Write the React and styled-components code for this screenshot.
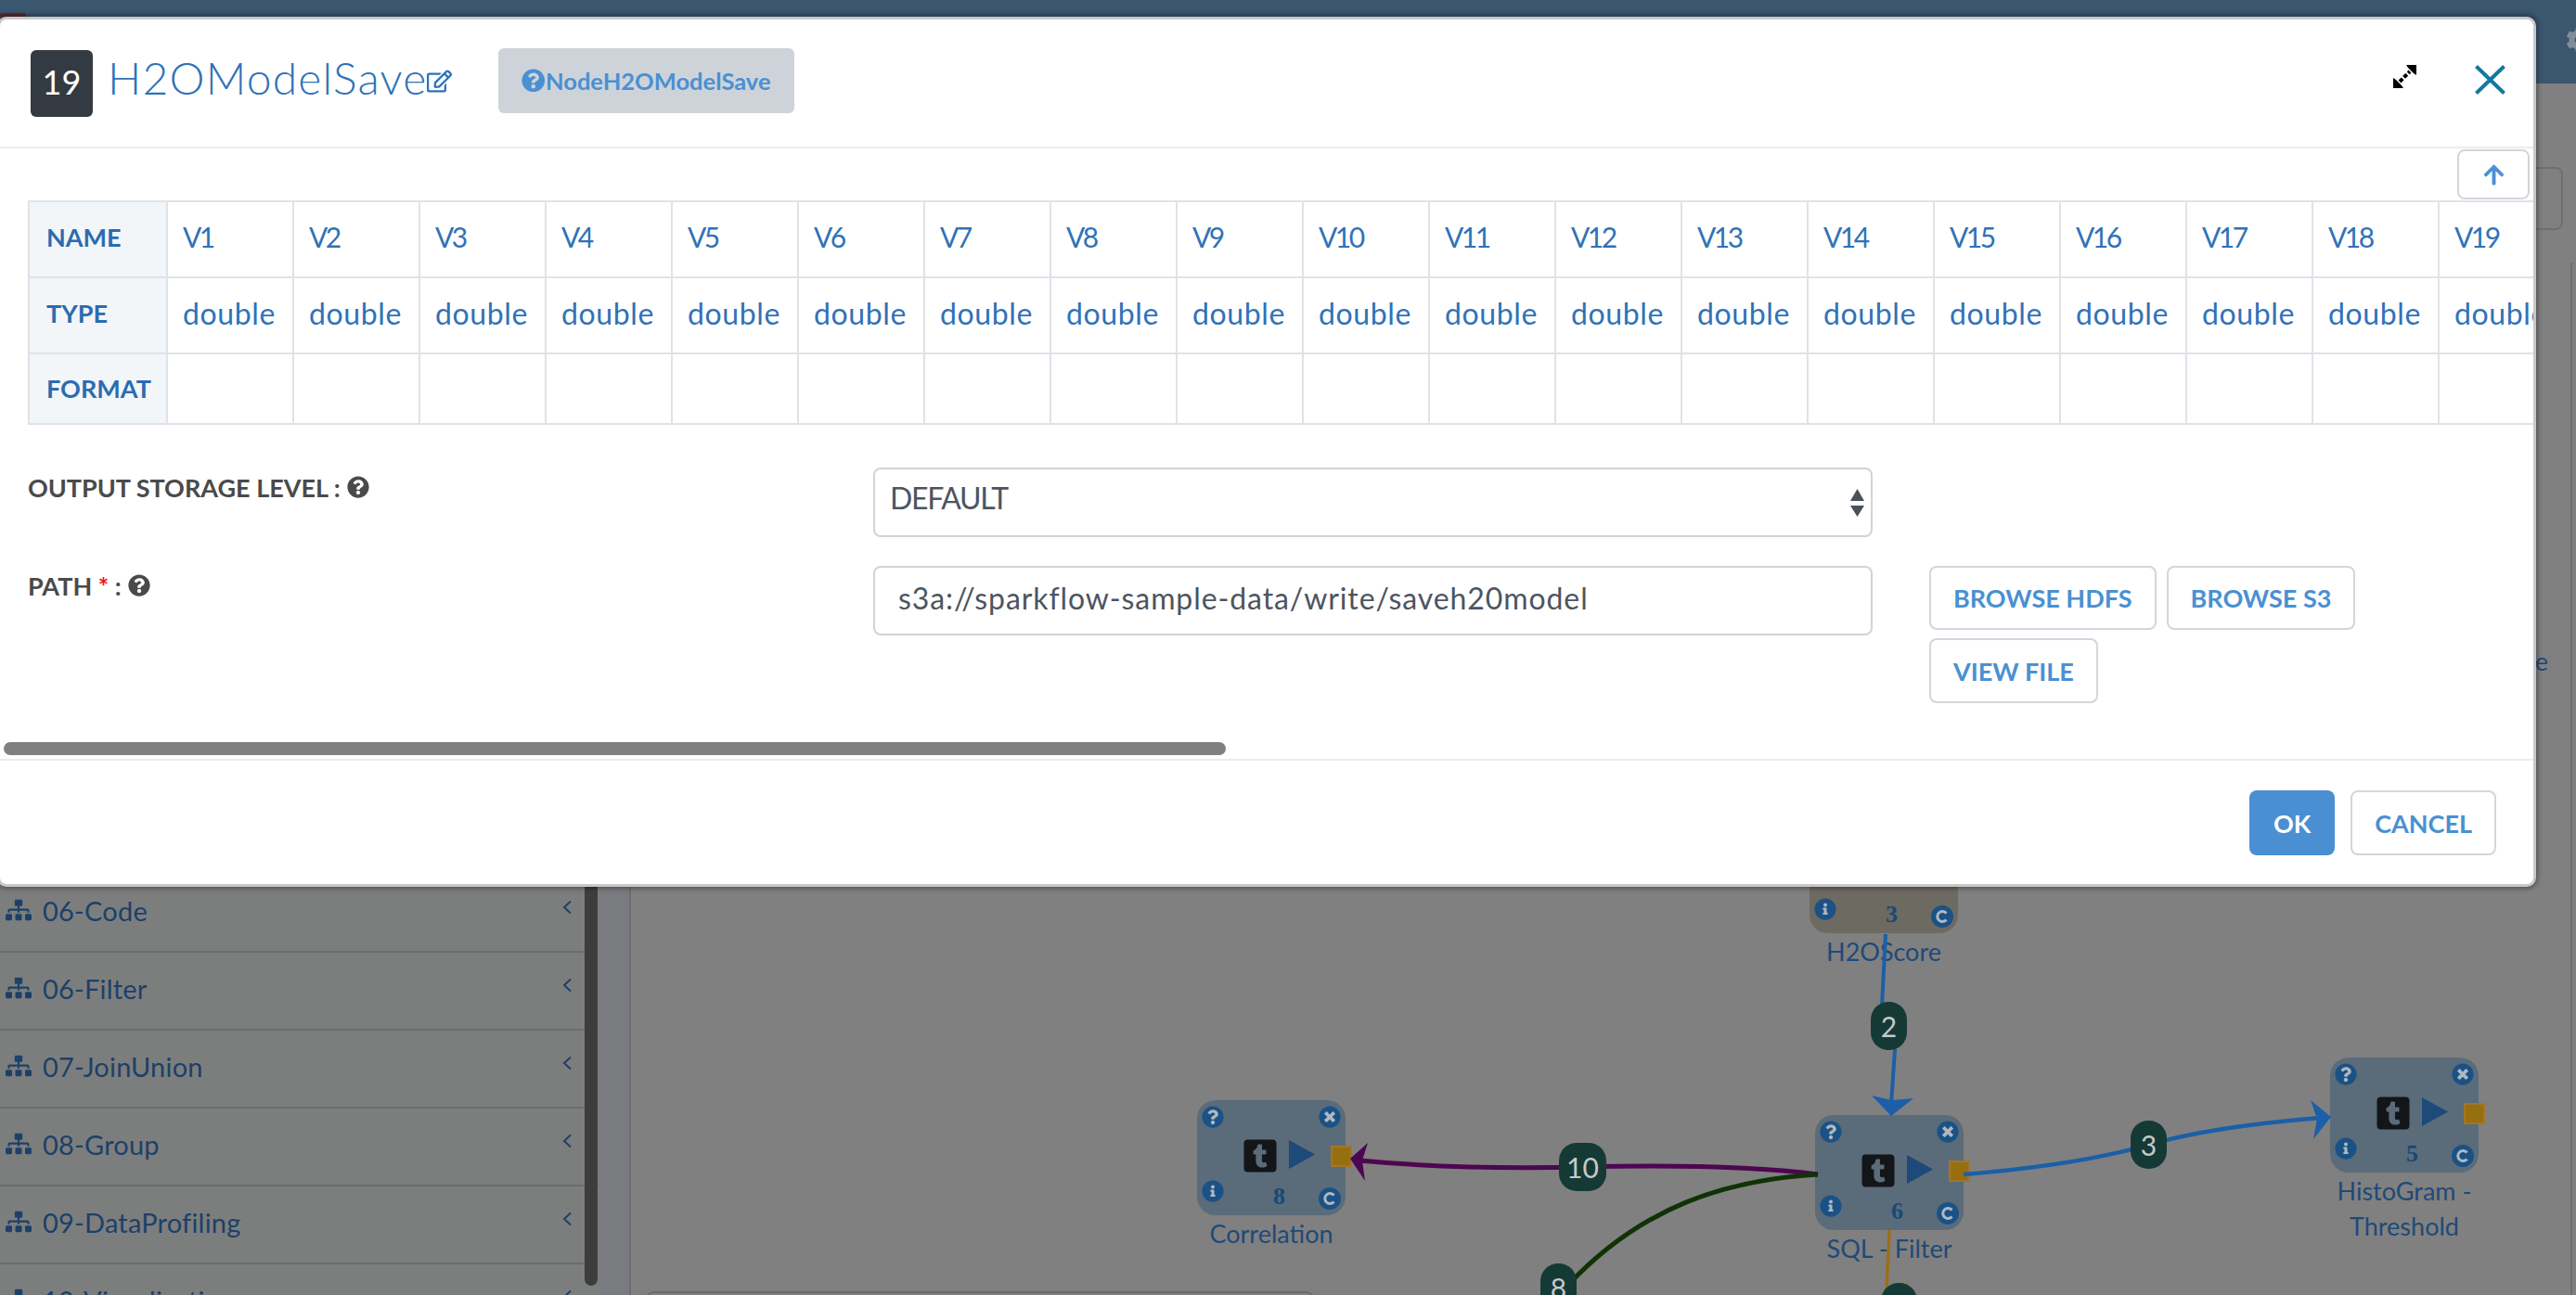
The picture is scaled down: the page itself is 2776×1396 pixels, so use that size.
import React from "react";
import styled, { createGlobalStyle } from "styled-components";
import {
  FaSitemap,
  FaCog,
  FaQuestionCircle,
  FaTimesCircle,
  FaInfoCircle,
  FaTumblrSquare,
  FaRegEdit,
  FaArrowUp,
} from "react-icons/fa";

const FONT = `Lato, "Noto Sans", sans-serif`;

const CATEGORIES = ["06-Code", "06-Filter", "07-JoinUnion", "08-Group", "09-DataProfiling", "10-Visualization"];

const COLUMNS = Array.from({ length: 24 }, (_, i) => `V${i + 1}`);

// canvas starts at 680,90 on the page
const NODES = [
  { id: 3, x: 1270, y: 792, label: ["H2OScore"], active: true },
  { id: 8, x: 610, y: 1096, label: ["Correlation"] },
  { id: 6, x: 1276, y: 1112, label: ["SQL - Filter"] },
  { id: 5, x: 1831, y: 1050, label: ["HistoGram -", "Threshold"] },
];

const BADGES = [
  { text: "2", x: 1336, y: 990 },
  { text: "10", x: 1000, y: 1142, wide: true },
  { text: "3", x: 1616, y: 1118 },
  { text: "8", x: 980, y: 1272 },
  { text: "1", x: 1347, y: 1293 },
];

const GlobalStyle = createGlobalStyle`
  html, body {
    margin: 0;
    padding: 0;
    background: #808080;
  }
  * {
    box-sizing: border-box;
  }
`;

const Page = styled.div`
  position: relative;
  width: 2776px;
  height: 1396px;
  overflow: hidden;
  background: #808080;
  font-family: ${FONT};
`;

const TopBar = styled.div`
  position: relative;
  height: 90px;
  background: #3b566f;
  display: flex;
  justify-content: flex-end;
  padding: 29px 0 0;
`;

const RedMark = styled.div`
  position: absolute;
  left: 0;
  top: 14px;
  width: 28px;
  height: 4px;
  background: #5e2a2e;
`;

const Gear = styled(FaCog)`
  font-size: 28px;
  color: #818d98;
  margin-right: -17px;
`;

const Workspace = styled.div`
  display: flex;
  height: 1306px;
`;

const Sidebar = styled.div`
  position: relative;
  width: 645px;
  flex: none;
  background: #7c7e7d;
  padding-top: 853px;
  overflow: hidden;
`;

const SidebarScroll = styled.div`
  position: absolute;
  right: 1px;
  bottom: 10px;
  width: 14px;
  height: 500px;
  border-radius: 7px;
  background: #3d3d3d;
`;

const CategoryRow = styled.div`
  display: flex;
  align-items: center;
  height: 84px;
  padding: 0 29px 6px 6px;
  border-bottom: 2px solid #6c6e6d;
  color: #1d4068;
  font-size: 29px;
  letter-spacing: 0.2px;
`;

const CategoryName = styled.span`
  flex: 1;
  margin-left: 12px;
`;

const ChevronSvg = styled.svg`
  width: 10px;
  height: 16px;
  margin-bottom: 6px;
`;

const Gutter = styled.div`
  width: 35px;
  flex: none;
  background: #797b7e;
  border-right: 2px solid #6b6d70;
`;

const Canvas = styled.div`
  position: relative;
  flex: 1;
`;

const Edges = styled.svg`
  position: absolute;
  left: 0;
  top: 0;
  width: 2096px;
  height: 1306px;
`;

const Node = styled.div`
  position: absolute;
  left: ${({ $x }) => $x}px;
  top: ${({ $y }) => $y}px;
  width: 160px;
`;

const NodeBox = styled.div`
  position: relative;
  height: 124px;
  border-radius: 20px;
  background: ${({ $active }) => ($active ? "#6d6a62" : "#5a6b7a")};
`;

const NodeIcon = styled.span`
  position: absolute;
  ${({ $top, $raised }) => ($top ? "top: 6px;" : `bottom: ${$raised ? "14px" : "6px"};`)}
  ${({ $left }) => ($left ? "left: 5px;" : "right: 5px;")}
  display: flex;
  font-size: 24px;
  color: #1b5286;
  background: radial-gradient(circle, #b0b8c0 45%, transparent 46%);
  border-radius: 50%;
`;

const NodeCenter = styled.div`
  position: absolute;
  left: 48px;
  top: 40px;
  display: flex;
  align-items: center;
  gap: 11px;
`;

const TumblrIcon = styled(FaTumblrSquare)`
  font-size: 40px;
  color: #131518;
`;

const RunIcon = styled.svg`
  width: 28px;
  height: 31px;
  margin-top: -3px;
`;

const OutPort = styled.div`
  position: absolute;
  right: -7px;
  top: 49px;
  width: 23px;
  height: 23px;
  background: #96700f;
  border: 2px solid #a5742a;
`;

const NodeNumber = styled.span`
  position: absolute;
  left: 82px;
  bottom: 5px;
  font-family: "Liberation Serif", serif;
  font-size: 26px;
  font-weight: 700;
  color: #1a4878;
`;

const NodeLabel = styled.div`
  text-align: center;
  padding-top: 1px;
  color: #1e4a78;
  font-size: 27px;
  line-height: 37px;
`;

const EdgeBadge = styled.div`
  position: absolute;
  left: ${({ $x }) => $x}px;
  top: ${({ $y }) => $y}px;
  width: ${({ $wide }) => ($wide ? "51px" : "39px")};
  height: 52px;
  display: flex;
  align-items: center;
  justify-content: center;
  border-radius: 19px;
  background: #153a36;
  color: #c4c9c8;
  font-size: 30px;
`;

const BottomBar = styled.div`
  position: absolute;
  left: 15px;
  top: 1302px;
  width: 722px;
  height: 20px;
  border: 2px solid #6b6b6b;
  border-radius: 10px;
`;

const RightOutline = styled.div`
  position: absolute;
  right: 14px;
  top: 90px;
  width: 40px;
  height: 68px;
  border: 2px solid #6b7075;
  border-radius: 8px;
`;

const RightRail = styled.div`
  position: absolute;
  right: 4px;
  top: 193px;
  bottom: 0;
  width: 2px;
  background: #6e6e6e;
`;

const HiddenTail = styled.span`
  position: absolute;
  right: 30px;
  top: 606px;
  color: #1e4a78;
  font-size: 27px;
`;

const Modal = styled.div`
  position: absolute;
  left: -3px;
  top: 18px;
  width: 2736px;
  height: 938px;
  display: flex;
  flex-direction: column;
  background: #fff;
  border: 3px solid #c8c8c8;
  border-radius: 10px;
  box-shadow: 0 0 5px 2px rgba(0, 0, 0, 0.35);
  overflow: hidden;
`;

const ModalHeader = styled.div`
  height: 139px;
  flex: none;
  display: flex;
  align-items: center;
  padding-left: 33px;
  border-bottom: 2px solid #e9edf1;
`;

const StepBadge = styled.div`
  width: 67px;
  height: 72px;
  flex: none;
  display: flex;
  align-items: center;
  justify-content: center;
  padding-bottom: 4px;
  border-radius: 6px;
  background: #343a42;
  color: #fff;
  font-size: 36px;
`;

const Title = styled.h1`
  margin: 0 0 12px 16px;
  color: #2f72b8;
  font-size: 48px;
  font-weight: 300;
  letter-spacing: 1.2px;
`;

const EditIcon = styled(FaRegEdit)`
  font-size: 27px;
  margin-bottom: 4px;
  color: #2f72b8;
`;

const DocTag = styled.div`
  display: flex;
  align-items: center;
  height: 70px;
  margin: 0 0 6px 50px;
  padding: 0 25px;
  border-radius: 6px;
  background: #ced3da;
  color: #4a90d2;
  font-size: 25.5px;
  font-weight: 700;
`;

const HeaderActions = styled.div`
  margin-left: auto;
  align-self: flex-start;
  display: flex;
  align-items: flex-start;
  gap: 63px;
  padding: 49px 30px 0 0;
`;

const ModalBody = styled.div`
  position: relative;
  flex: 1;
  min-height: 0;
  overflow: hidden;
  padding: 56px 0 0 30px;
`;

const UpButton = styled.button`
  position: absolute;
  left: 2648px;
  top: 1px;
  width: 78px;
  height: 54px;
  display: flex;
  align-items: center;
  justify-content: center;
  background: #fff;
  border: 2px solid #d2d6dc;
  border-radius: 8px;
  color: #4a90d8;
  font-size: 25px;
  padding: 0;
  z-index: 1;
`;

const SchemaTable = styled.table`
  table-layout: fixed;
  border-collapse: collapse;
  width: ${({ $cols }) => 149 + $cols * 136}px;
`;

const HeadCell = styled.th`
  width: 149px;
  height: ${({ $short }) => ($short ? "76px" : "82px")};
  padding: 0 0 ${({ $short }) => ($short ? "2px" : "6px")} 18px;
  border: 2px solid #dfe3e8;
  background: #f3f6f9;
  color: #2b6cb0;
  font-size: 27px;
  font-weight: 700;
  text-align: left;
`;

const Cell = styled.td`
  width: 136px;
  padding: 0 0 6px 16px;
  border: 2px solid #dfe3e8;
  color: #2f72b8;
  font-size: ${({ $name }) => ($name ? "30px" : "32px")};
  letter-spacing: ${({ $name }) => ($name ? "-2.5px" : "0.6px")};
  white-space: nowrap;
  overflow: hidden;
`;

const FormRow = styled.div`
  display: grid;
  grid-template-columns: 911px 1077px 560px;
  margin-top: ${({ $first }) => ($first ? "46px" : "31px")};
`;

const FieldLabel = styled.label`
  display: flex;
  align-items: center;
  gap: 7px;
  height: 26px;
  margin-top: 8px;
  color: #4a4a4a;
  font-size: 27px;
  font-weight: 700;
`;

const HelpIcon = styled(FaQuestionCircle)`
  font-size: 24px;
  color: #4a4a4a;
`;

const Required = styled.span`
  color: #f5141e;
`;

const SelectWrap = styled.div`
  position: relative;
`;

const LevelSelect = styled.select`
  width: 100%;
  height: 75px;
  padding: 0 0 10px 16px;
  appearance: none;
  background: #fff;
  border: 2px solid #ced4da;
  border-radius: 8px;
  color: #4c5560;
  font-family: ${FONT};
  font-size: 32px;
  letter-spacing: -1.3px;
`;

const SelectArrows = styled.svg`
  position: absolute;
  right: 9px;
  top: 23px;
  width: 15px;
  height: 30px;
`;

const PathInput = styled.input`
  width: 100%;
  height: 75px;
  padding: 0 0 6px 25px;
  background: #fff;
  border: 2px solid #ced4da;
  border-radius: 8px;
  color: #4c5560;
  font-family: ${FONT};
  font-size: 32px;
  letter-spacing: 0.9px;
`;

const BrowseGroup = styled.div`
  display: flex;
  flex-wrap: wrap;
  align-content: flex-start;
  gap: 9px 11px;
  padding-left: 61px;
`;

const OutlineButton = styled.button`
  height: ${({ $tall }) => ($tall ? "70px" : "69px")};
  padding: 0 24px;
  background: #fff;
  border: 2px solid #d2d6dc;
  border-radius: 8px;
  color: #4a90d2;
  font-family: ${FONT};
  font-size: 27px;
  font-weight: 700;
`;

const ScrollThumb = styled.div`
  position: absolute;
  left: 4px;
  bottom: 4px;
  width: 1317px;
  height: 14px;
  border-radius: 7px;
  background: #808080;
`;

const ModalFooter = styled.div`
  height: 135px;
  flex: none;
  display: flex;
  justify-content: flex-end;
  align-items: flex-start;
  gap: 17px;
  padding: 32px 40px 0 0;
  border-top: 2px solid #e9edf1;
`;

const OkButton = styled.button`
  width: 92px;
  height: 70px;
  background: #4a8fd2;
  border: none;
  border-radius: 8px;
  color: #fff;
  font-family: ${FONT};
  font-size: 27px;
  font-weight: 700;
`;

function CloseIcon() {
  return (
    <svg width="33" height="32" viewBox="0 0 33 32">
      <path d="M1.5 1.5 L31.5 30.5 M31.5 1.5 L1.5 30.5" stroke="#13789e" strokeWidth="4" fill="none" />
    </svg>
  );
}

function ExpandIcon() {
  return (
    <svg width="25" height="25" viewBox="0 0 25 25">
      <path d="M7 18 L18 7" stroke="#000" strokeWidth="4" strokeDasharray="4.5 2" fill="none" />
      <path d="M0 25 L0 14 L3 16 L9 22 L11 25 Z M25 0 L25 11 L22 9 L16 3 L14 0 Z" fill="#000" />
    </svg>
  );
}

function ConnectIcon() {
  return (
    <svg width="24" height="24" viewBox="0 0 24 24">
      <circle cx="12" cy="12" r="12" fill="#1b5286" />
      <path d="M16.5 8.5 A5.5 5.5 0 1 0 16.5 15.5" stroke="#b0b8c0" strokeWidth="3" fill="none" />
    </svg>
  );
}

function ArrowHead({ points, color }) {
  return <polygon points={points} fill={color} />;
}

function CanvasEdges() {
  const blue = "#1a5fa8";
  return (
    <Edges viewBox="680 90 2096 1306">
      <path d="M2032 1007 C2030 1050 2029 1070 2028 1085 C2030 1120 2042 1110 2042 1132 L2038 1190" stroke={blue} strokeWidth="4" fill="none" />
      <ArrowHead points="2038,1203 2017,1181 2038,1186 2062,1184" color={blue} />
      <path d="M1959 1266 C1880 1256 1790 1256 1705 1258 C1620 1260 1540 1258 1465 1251" stroke="#4e0650" strokeWidth="5" fill="none" />
      <ArrowHead points="1455,1249 1474,1232 1468,1251 1471,1273" color="#4e0650" />
      <path d="M1959 1266 C1860 1272 1770 1300 1690 1385" stroke="#0f3305" strokeWidth="5" fill="none" />
      <path d="M2116 1266 C2190 1260 2260 1250 2316 1234 C2370 1218 2440 1210 2500 1205" stroke={blue} strokeWidth="4.5" fill="none" />
      <ArrowHead points="2512,1204 2490,1186 2497,1206 2493,1228" color={blue} />
      <path d="M2036 1326 L2033 1390" stroke="#9a6e1a" strokeWidth="3.5" fill="none" />
      <ArrowHead points="2055,1382 2059,1392 2050,1392" color="#9a6e1a" />
    </Edges>
  );
}

function FlowNode({ node }) {
  return (
    <Node $x={node.x} $y={node.y}>
      <NodeBox $active={node.active}>
        <NodeIcon $top $left>
          <FaQuestionCircle />
        </NodeIcon>
        <NodeIcon $top>
          <FaTimesCircle />
        </NodeIcon>
        <NodeIcon $left $raised>
          <FaInfoCircle />
        </NodeIcon>
        <NodeIcon>
          <ConnectIcon />
        </NodeIcon>
        {!node.active && (
          <NodeCenter>
            <TumblrIcon />
            <RunIcon viewBox="0 0 28 31">
              <polygon points="0,0 28,15.5 0,31" fill="#1d4a78" />
            </RunIcon>
          </NodeCenter>
        )}
        {!node.active && <OutPort />}
        <NodeNumber>{node.id}</NodeNumber>
      </NodeBox>
      {node.label.map((line) => (
        <NodeLabel key={line}>{line}</NodeLabel>
      ))}
    </Node>
  );
}

function App() {
  return (
    <Page>
      <GlobalStyle />
      <TopBar>
        <RedMark />
        <Gear />
      </TopBar>
      <Workspace>
        <Sidebar>
          {CATEGORIES.map((name) => (
            <CategoryRow key={name}>
              <FaSitemap size={28} />
              <CategoryName>{name}</CategoryName>
              <ChevronSvg viewBox="0 0 10 16">
                <path d="M9 1.5 L2 8 L9 14.5" stroke="#1d4068" strokeWidth="2" fill="none" />
              </ChevronSvg>
            </CategoryRow>
          ))}
          <SidebarScroll />
        </Sidebar>
        <Gutter />
        <Canvas>
          {NODES.map((node) => (
            <FlowNode key={node.id} node={node} />
          ))}
          <CanvasEdges />
          {BADGES.map((badge) => (
            <EdgeBadge key={badge.text} $x={badge.x} $y={badge.y} $wide={badge.wide}>
              {badge.text}
            </EdgeBadge>
          ))}
          <BottomBar />
          <RightOutline />
          <RightRail />
          <HiddenTail>e</HiddenTail>
        </Canvas>
      </Workspace>

      <Modal>
        <ModalHeader>
          <StepBadge>19</StepBadge>
          <Title>H2OModelSave</Title>
          <EditIcon />
          <DocTag>
            <FaQuestionCircle />
            NodeH2OModelSave
          </DocTag>
          <HeaderActions>
            <ExpandIcon />
            <CloseIcon />
          </HeaderActions>
        </ModalHeader>

        <ModalBody>
          <UpButton>
            <FaArrowUp />
          </UpButton>
          <SchemaTable $cols={COLUMNS.length}>
            <tbody>
              <tr>
                <HeadCell>NAME</HeadCell>
                {COLUMNS.map((col) => (
                  <Cell key={col} $name>
                    {col}
                  </Cell>
                ))}
              </tr>
              <tr>
                <HeadCell>TYPE</HeadCell>
                {COLUMNS.map((col) => (
                  <Cell key={col}>double</Cell>
                ))}
              </tr>
              <tr>
                <HeadCell $short>FORMAT</HeadCell>
                {COLUMNS.map((col) => (
                  <Cell key={col} />
                ))}
              </tr>
            </tbody>
          </SchemaTable>

          <FormRow $first>
            <FieldLabel>
              OUTPUT STORAGE LEVEL :
              <HelpIcon />
            </FieldLabel>
            <SelectWrap>
              <LevelSelect defaultValue="DEFAULT">
                <option>DEFAULT</option>
              </LevelSelect>
              <SelectArrows viewBox="0 0 15 30">
                <path d="M7.5 0 L15 13 L0 13 Z M7.5 30 L0 18 L15 18 Z" fill="#4a525c" />
              </SelectArrows>
            </SelectWrap>
          </FormRow>

          <FormRow>
            <FieldLabel>
              <span>
                PATH <Required>*</Required> :
              </span>
              <HelpIcon />
            </FieldLabel>
            <PathInput defaultValue="s3a://sparkflow-sample-data/write/saveh20model" />
            <BrowseGroup>
              <OutlineButton>BROWSE HDFS</OutlineButton>
              <OutlineButton>BROWSE S3</OutlineButton>
              <OutlineButton $tall>VIEW FILE</OutlineButton>
            </BrowseGroup>
          </FormRow>

          <ScrollThumb />
        </ModalBody>

        <ModalFooter>
          <OkButton>OK</OkButton>
          <OutlineButton $tall>CANCEL</OutlineButton>
        </ModalFooter>
      </Modal>
    </Page>
  );
}

export default App;
